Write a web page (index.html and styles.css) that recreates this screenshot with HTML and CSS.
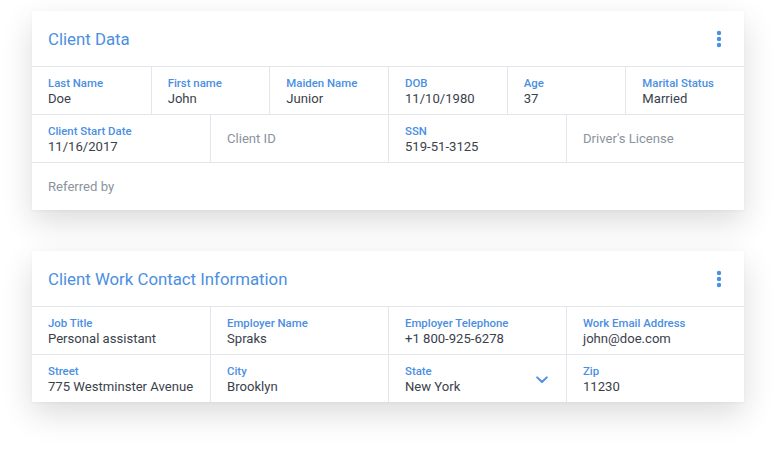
FILE: index.html
```html
<!DOCTYPE html>
<html>
<head>
<meta charset="utf-8">
<link rel="stylesheet" href="styles.css">
</head>
<body>
<div class="page">
  <section class="card">
    <header class="card-head">
      <h2 class="card-title">Client Data</h2>
      <svg class="more" width="6" height="18" viewBox="0 0 6 18"><circle cx="3" cy="3" r="2.2"/><circle cx="3" cy="9" r="2.2"/><circle cx="3" cy="15" r="2.2"/></svg>
    </header>
    <div class="row cols6">
      <div class="cell"><div class="label">Last Name</div><div class="value">Doe</div></div>
      <div class="cell"><div class="label">First name</div><div class="value">John</div></div>
      <div class="cell"><div class="label">Maiden Name</div><div class="value">Junior</div></div>
      <div class="cell"><div class="label">DOB</div><div class="value">11/10/1980</div></div>
      <div class="cell"><div class="label">Age</div><div class="value">37</div></div>
      <div class="cell"><div class="label">Marital Status</div><div class="value">Married</div></div>
    </div>
    <div class="row cols4">
      <div class="cell"><div class="label">Client Start Date</div><div class="value">11/16/2017</div></div>
      <div class="cell"><div class="placeholder">Client ID</div></div>
      <div class="cell"><div class="label">SSN</div><div class="value">519-51-3125</div></div>
      <div class="cell"><div class="placeholder">Driver's License</div></div>
    </div>
    <div class="row cols1">
      <div class="cell"><div class="placeholder">Referred by</div></div>
    </div>
  </section>

  <section class="card">
    <header class="card-head">
      <h2 class="card-title">Client Work Contact Information</h2>
      <svg class="more" width="6" height="18" viewBox="0 0 6 18"><circle cx="3" cy="3" r="2.2"/><circle cx="3" cy="9" r="2.2"/><circle cx="3" cy="15" r="2.2"/></svg>
    </header>
    <div class="row cols4">
      <div class="cell"><div class="label">Job Title</div><div class="value">Personal assistant</div></div>
      <div class="cell"><div class="label">Employer Name</div><div class="value">Spraks</div></div>
      <div class="cell"><div class="label">Employer Telephone</div><div class="value">+1 800-925-6278</div></div>
      <div class="cell"><div class="label">Work Email Address</div><div class="value">john@doe.com</div></div>
    </div>
    <div class="row cols4">
      <div class="cell"><div class="label">Street</div><div class="value">775 Westminster Avenue</div></div>
      <div class="cell"><div class="label">City</div><div class="value">Brooklyn</div></div>
      <div class="cell select">
        <div><div class="label">State</div><div class="value">New York</div></div>
        <svg class="chev" width="12" height="8" viewBox="0 0 12 8"><path d="M1.2 1.4 L6 6 L10.8 1.4" fill="none" stroke="#4a8fe2" stroke-width="2" stroke-linecap="round" stroke-linejoin="round"/></svg>
      </div>
      <div class="cell"><div class="label">Zip</div><div class="value">11230</div></div>
    </div>
  </section>
</div>
</body>
</html>
```

FILE: styles.css
```css
html, body {
  margin: 0;
  padding: 0;
  background: #ffffff;
}
body {
  font-family: Roboto, "Liberation Sans", Arial, sans-serif;
  width: 776px;
  height: 456px;
  overflow: hidden;
}
.page {
  padding: 11px 32px 0 32px;
  display: flex;
  flex-direction: column;
  gap: 41px;
}
.card {
  background: #ffffff;
  box-shadow: 0 12px 30px rgba(0, 0, 0, 0.14), 0 1px 3px rgba(0, 0, 0, 0.04);
}
.card-head {
  height: 55px;
  border-bottom: 1px solid #e3e7eb;
  display: flex;
  align-items: center;
  justify-content: space-between;
  padding: 0 22px 0 16px;
}
.card-title {
  margin: 0;
  font-size: 16.8px;
  font-weight: 400;
  color: #4a8fe2;
  padding-top: 1px;
}
.more {
  fill: #4a8fe2;
  display: block;
}
.row {
  display: grid;
  border-bottom: 1px solid #e3e7eb;
}
.row:last-child {
  border-bottom: none;
}
.cols6 { grid-template-columns: repeat(6, 1fr); }
.cols4 { grid-template-columns: repeat(4, 1fr); }
.cols1 { grid-template-columns: 1fr; }
.cell {
  height: 47px;
  box-sizing: border-box;
  padding: 9px 16px 0 16px;
  border-left: 1px solid #e3e7eb;
}
.cell:first-child {
  border-left: none;
}
.label {
  font-size: 11.4px;
  line-height: 14px;
  font-weight: 500;
  color: #4a8fe2;
}
.value {
  font-size: 13.1px;
  line-height: 17px;
  color: #3b414b;
  white-space: nowrap;
}
.placeholder {
  font-size: 13.1px;
  line-height: 17px;
  color: #8a939e;
  padding-top: 6px;
}
.select {
  display: flex;
  justify-content: space-between;
  align-items: flex-start;
  padding-right: 18px;
}
.chev {
  display: block;
  margin-top: 12px;
}
```
